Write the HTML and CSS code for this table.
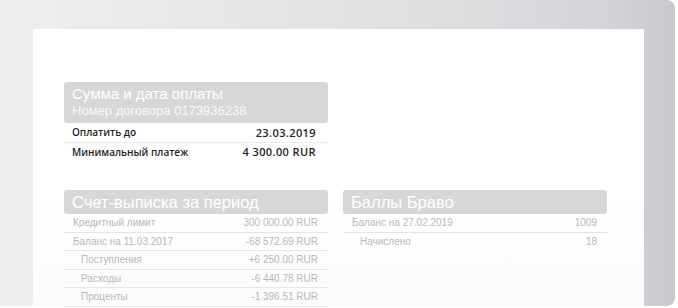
FILE: index.html
```html
<!DOCTYPE html>
<html lang="ru">
<head>
<meta charset="utf-8">
<title>Выписка</title>
<link rel="stylesheet" href="styles.css">
</head>
<body>
<div class="frame">
  <div class="sheet">
    <section class="card card-pay">
      <div class="head head-tall">
        <div class="title">Сумма и дата оплаты</div>
        <div class="subtitle">Номер договора 0173936238</div>
      </div>
      <div class="row strong"><span>Оплатить до</span><span class="val">23.03.2019</span></div>
      <div class="row strong last"><span>Минимальный платеж</span><span class="val">4 300.00 RUR</span></div>
    </section>
    <div class="pair">
      <section class="card faded">
        <div class="head"><div class="title">Счет-выписка за период</div></div>
        <div class="row"><span>Кредитный лимит</span><span>300 000.00 RUR</span></div>
        <div class="row"><span>Баланс на 11.03.2017</span><span>-68 572.69 RUR</span></div>
        <div class="row sub"><span>Поступления</span><span>+6 250.00 RUR</span></div>
        <div class="row sub"><span>Расходы</span><span>-6 440.78 RUR</span></div>
        <div class="row sub"><span>Проценты</span><span>-1 396.51 RUR</span></div>
      </section>
      <section class="card faded">
        <div class="head"><div class="title">Баллы Браво</div></div>
        <div class="row"><span>Баланс на 27.02.2019</span><span>1009</span></div>
        <div class="row sub last"><span>Начислено</span><span>18</span></div>
      </section>
    </div>
  </div>
</div>
</body>
</html>
```
FILE: styles.css
```css
html, body {
  margin: 0;
  padding: 0;
  background: #ffffff;
}
body {
  width: 678px;
  height: 308px;
  overflow: hidden;
  font-family: "Liberation Sans", Arial, sans-serif;
}
.frame {
  width: 675px;
  height: 306px;
  box-sizing: border-box;
  padding: 29px 31px 0 33px;
  border-radius: 0 8px 8px 0;
  background: linear-gradient(90deg, #efefef 0%, #e7e7e8 30%, #dddde0 70%, #d3d4d7 90%, #c8c9cc 100%);
}
.sheet {
  height: 100%;
  background: linear-gradient(180deg, #ffffff 0%, #ffffff 60%, #fbfbfb 100%);
  box-sizing: border-box;
  padding: 53px 0 0 31px;
}
.card {
  width: 264px;
}
.head {
  background: #d7d7d7;
  border-radius: 3px;
  color: #ffffff;
  padding: 0 8px;
  height: 24px;
  box-sizing: border-box;
}
.head .title {
  font-size: 16.5px;
  line-height: 24px;
  white-space: nowrap;
}
.head-tall {
  height: 41px;
  padding-top: 3px;
}
.head-tall .title {
  font-size: 15px;
  line-height: 18px;
}
.head-tall .subtitle {
  font-size: 13px;
  line-height: 16px;
  color: rgba(255, 255, 255, 0.85);
}
.row {
  display: flex;
  justify-content: space-between;
  align-items: center;
  height: 17.5px;
  padding: 0 10px 0 9px;
  border-bottom: 1px solid #e6e6e6;
  font-size: 10px;
  color: #b3b3b3;
  white-space: nowrap;
}
.row.sub {
  padding-left: 17px;
}
.row.strong {
  height: 18.5px;
  font-family: "Open Sans", "Liberation Sans", sans-serif;
  font-weight: 600;
  font-size: 10px;
  color: #1e1e1e;
  padding: 0 12px 0 8px;
  border-bottom-color: #ececec;
}
.row.strong .val {
  font-size: 11px;
  letter-spacing: 0.4px;
}
.row.last {
  border-bottom-color: transparent;
}
.pair {
  display: flex;
  gap: 15px;
  margin-top: 28px;
}
.faded .row {
  color: #b8b8b8;
}
```
